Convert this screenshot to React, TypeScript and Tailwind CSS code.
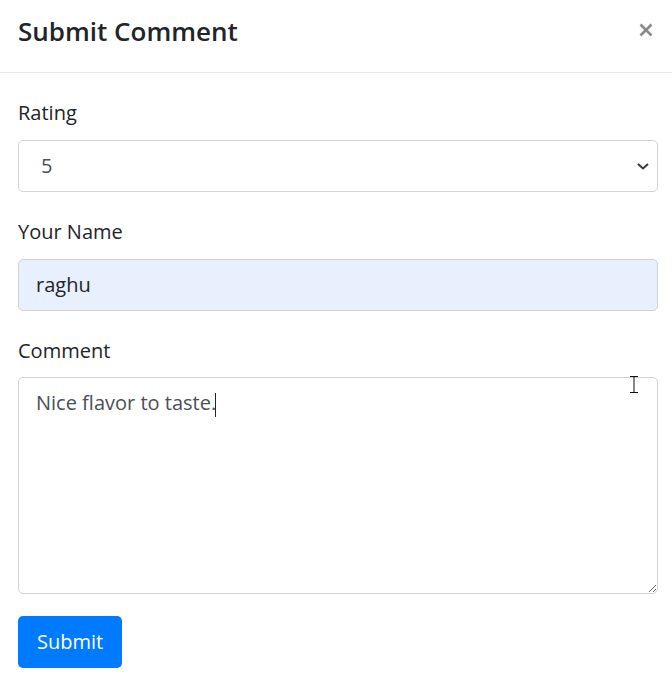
const font = { fontFamily: '"Open Sans", "Noto Sans", "Liberation Sans", sans-serif' };

type FieldProps = {
  label: string;
  children: React.ReactNode;
};

const Field = ({ label, children }: FieldProps) => {
  return (
    <div className="flex flex-col mb-[25px]">
      <label className="text-[20px] leading-[30px] text-[#212529] mb-[12px]">{label}</label>
      {children}
    </div>
  );
};

export default function App() {
  return (
    <div className="w-[672px] h-[686px] bg-white text-[#212529]" style={font}>
      <div className="flex items-center justify-between h-[73px] px-[18px] pb-[10px] border-b border-[#e9ecef]">
        <h5 className="text-[26px] font-semibold leading-none">Submit Comment</h5>
        <button className="w-[14px] h-[14px] mr-[1px] mt-[-2px] text-[#8a8a8a]" aria-label="Close">
          <svg viewBox="0 0 14 14" className="w-[14px] h-[14px]">
            <path d="M1.5 1.5 L12.5 12.5 M12.5 1.5 L1.5 12.5" stroke="currentColor" strokeWidth="2.6" />
          </svg>
        </button>
      </div>

      <div className="px-[18px] pt-[25px] pr-[14px]">
        <Field label="Rating">
          <div className="flex items-center justify-between h-[52px] px-[22px] border border-[#ced4da] rounded-[5px] text-[20px] text-[#495057]">
            <span>5</span>
            <svg viewBox="0 0 12 7" className="w-[12px] h-[7px] -mr-[14px]">
              <path d="M1 1 L6 5.5 L11 1" fill="none" stroke="#343a40" strokeWidth="2" />
            </svg>
          </div>
        </Field>

        <Field label="Your Name">
          <div className="flex items-center h-[52px] px-[17px] border border-[#ced4da] rounded-[5px] bg-[#e8f0fe] text-[20px] text-[#212529]">
            raghu
          </div>
        </Field>

        <Field label="Comment">
          <div className="relative -mt-[1px]">
            <div className="h-[217px] px-[17px] pt-[10px] border border-[#ced4da] rounded-[5px] text-[20px] leading-[30px] text-[#495057] resize-y overflow-auto">
              Nice flavor to taste.
              <span className="inline-block w-[1px] h-[24px] bg-[#212529] align-middle -ml-[1px]" />
            </div>
            {/* mouse pointer */}
            <svg viewBox="0 0 8 17" className="absolute right-[20px] -top-[1px] w-[8px] h-[17px]">
              <path d="M0 0.5 H8 M4 0.5 V16.5 M0 16.5 H8" fill="none" stroke="#111" strokeWidth="1" />
            </svg>
          </div>
        </Field>

        <button className="h-[52px] px-[19px] -mt-[3px] rounded-[5px] bg-[#007bff] text-white text-[20px]">
          Submit
        </button>
      </div>
    </div>
  );
}
